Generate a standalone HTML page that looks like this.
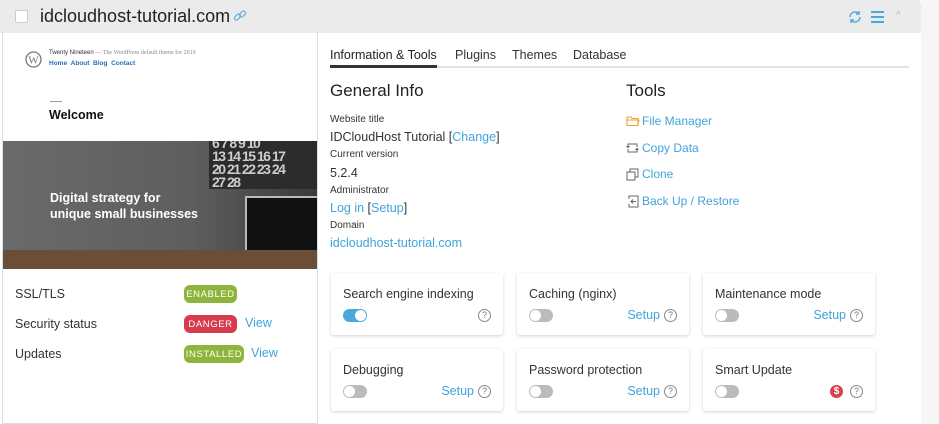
<!DOCTYPE html><html><head><style>
*{margin:0;padding:0;box-sizing:border-box}
body{width:939px;height:424px;background:#f6f6f6;font-family:"Liberation Sans",sans-serif;color:#333;position:relative;overflow:hidden}
.a{position:absolute}
.lnk{color:#3fa4dc}
.card{position:absolute;width:172px;height:62px;background:#fff;border-radius:3px;box-shadow:0 1px 3px rgba(0,0,0,.18)}
.card .t{position:absolute;left:12px;top:14px;font-size:12.5px;color:#333}
.tg{position:absolute;left:12px;top:36px;width:24px;height:13px;border-radius:7px;background:#bbb}
.tg:after{content:"";position:absolute;left:1px;top:1px;width:11px;height:11px;border-radius:50%;background:#fff}
.tg.on{background:#4aa8df}.tg.on:after{left:12px}
.q{position:absolute;right:12px;top:36px;width:13px;height:13px;border:1px solid #888;border-radius:50%;font-size:9px;text-align:center;line-height:11px;color:#777}
.su{position:absolute;right:29px;top:35px;font-size:12.5px;color:#3fa4dc}
.badge{position:absolute;left:184px;height:18px;border-radius:6px;color:#fff;font-size:9.5px;letter-spacing:.6px;line-height:19px;text-align:center}
</style></head><body>
<div class="a" style="left:0;top:0;width:921px;height:424px;background:#fff"></div>
<div class="a" style="left:0;top:0;width:921px;height:33px;background:#ebebeb;border-radius:0 4px 0 0"></div>
<div class="a" style="left:15px;top:10px;width:13px;height:13px;background:#fff;border:1px solid #ccc;border-radius:2px"></div>
<div class="a" style="left:40px;top:6px;font-size:18px;color:#222">idcloudhost-tutorial.com</div>
<svg class="a" style="left:233px;top:9px" width="14" height="14" viewBox="0 0 14 14" fill="none" stroke="#6ab4e4" stroke-width="1.3"><rect x="1" y="6" width="7" height="4" rx="2" transform="rotate(-45 4.5 8)"/><rect x="6" y="3" width="7" height="4" rx="2" transform="rotate(-45 9.5 5)"/></svg>
<svg class="a" style="left:848px;top:10px" width="14" height="14" viewBox="0 0 14 14" fill="none" stroke="#4aa8df" stroke-width="1.4"><path d="M2 7a5 5 0 0 1 9-3M12 7a5 5 0 0 1-9 3"/><path d="M11 1v3h-3M3 13v-3h3"/></svg>
<div class="a" style="left:871px;top:11px;width:13px;height:2px;background:#4aa8df;box-shadow:0 5px 0 #4aa8df,0 10px 0 #4aa8df"></div>
<div class="a" style="left:896px;top:10px;font-size:10px;color:#8ac4ea">^</div>
<div class="a" style="left:2px;top:33px;width:316px;height:391px;border:1px solid #ddd;border-top:none"></div>
<div class="a" style="left:3px;top:34px;width:314px;height:107px;background:#fff"></div>
<svg class="a" style="left:25px;top:51px" width="17" height="17" viewBox="0 0 17 17"><circle cx="8.5" cy="8.5" r="7.5" fill="none" stroke="#777" stroke-width="1.3"/><text x="8.5" y="12.5" font-size="11" text-anchor="middle" fill="#777" font-family="Liberation Serif">W</text></svg>
<div class="a" style="left:49px;top:50px;font-size:6px;color:#333">Twenty Nineteen <span style="color:#888;font-family:'Liberation Serif'">— The WordPress default theme for 2019</span></div>
<div class="a" style="left:49px;top:60px;font-size:6.5px;color:#2a6db5;font-weight:bold">Home &nbsp;About &nbsp;Blog &nbsp;Contact</div>
<div class="a" style="left:50px;top:101px;width:12px;height:1px;background:#999"></div>
<div class="a" style="left:49px;top:108px;font-size:12.5px;font-weight:bold;color:#111">Welcome</div>
<div class="a" style="left:3px;top:141px;width:314px;height:128px;background:linear-gradient(90deg,#6a6a6a 0%,#5e5e5e 60%,#3a3a3a 100%)"></div>
<div class="a" style="left:209px;top:141px;width:108px;height:48px;background:#2c2c2c;overflow:hidden"><div style="margin-top:-4px;padding-left:3px;color:#ccc;font-size:14px;font-weight:bold;line-height:13px;letter-spacing:-1.5px;white-space:nowrap">6 7 8 9 10<br>13 14 15 16 17<br>20 21 22 23 24<br>27 28</div></div>
<div class="a" style="left:245px;top:196px;width:72px;height:56px;background:#111;border:2px solid #bbb;border-right:none"></div>
<div class="a" style="left:3px;top:250px;width:314px;height:19px;background:#6b4e38"></div>
<div class="a" style="left:50px;top:190px;font-size:12.5px;font-weight:bold;color:#fff;line-height:16px">Digital strategy for<br>unique small businesses</div>
<div class="a" style="left:15px;top:287px;font-size:12.5px">SSL/TLS</div>
<div class="a" style="left:15px;top:317px;font-size:12.5px">Security status</div>
<div class="a" style="left:15px;top:347px;font-size:12.5px">Updates</div>
<div class="badge" style="top:285px;width:53px;background:#8db43b">ENABLED</div>
<div class="badge" style="top:315px;width:53px;background:#d63b4e">DANGER</div>
<div class="badge" style="top:345px;width:60px;background:#8db43b">INSTALLED</div>
<div class="a lnk" style="left:245px;top:316px;font-size:12.5px">View</div>
<div class="a lnk" style="left:251px;top:346px;font-size:12.5px">View</div>
<div class="a" style="left:330px;top:66px;width:579px;height:2px;background:#e3e3e3"></div>
<div class="a" style="left:330px;top:65px;width:107px;height:3px;background:#333"></div>
<div class="a" style="left:330px;top:48px;font-size:12.5px;color:#222">Information &amp; Tools</div>
<div class="a" style="left:455px;top:48px;font-size:12.5px">Plugins</div>
<div class="a" style="left:512px;top:48px;font-size:12.5px">Themes</div>
<div class="a" style="left:573px;top:48px;font-size:12.5px">Database</div>
<div class="a" style="left:330px;top:81px;font-size:17px;color:#222">General Info</div>
<div class="a" style="left:330px;top:114px;font-size:10px">Website title</div>
<div class="a" style="left:330px;top:130px;font-size:12.5px">IDCloudHost Tutorial [<span class="lnk">Change</span>]</div>
<div class="a" style="left:330px;top:149px;font-size:10px">Current version</div>
<div class="a" style="left:330px;top:166px;font-size:12.5px">5.2.4</div>
<div class="a" style="left:330px;top:185px;font-size:10px">Administrator</div>
<div class="a" style="left:330px;top:201px;font-size:12.5px"><span class="lnk">Log in</span> [<span class="lnk">Setup</span>]</div>
<div class="a" style="left:330px;top:220px;font-size:10px">Domain</div>
<div class="a lnk" style="left:330px;top:236px;font-size:12.5px">idcloudhost-tutorial.com</div>
<div class="a" style="left:626px;top:81px;font-size:17px;color:#222">Tools</div>
<svg class="a" style="left:626px;top:115px" width="14" height="12" viewBox="0 0 14 12" fill="none" stroke="#f0a030" stroke-width="1.1"><path d="M1 2h4l1 1.5h6v7H1z M1 5h12l-1.5 5.5"/></svg>
<div class="a lnk" style="left:642px;top:114px;font-size:12px">File Manager</div>
<svg class="a" style="left:626px;top:142px" width="13" height="12" viewBox="0 0 13 12" fill="none" stroke="#666" stroke-width="1"><path d="M2 5V2h9v3M11 7v3H2V7M0.5 4l1.5 1.5 1.5-1.5M9.5 8l1.5-1.5 1.5 1.5"/></svg>
<div class="a lnk" style="left:642px;top:141px;font-size:12px">Copy Data</div>
<svg class="a" style="left:626px;top:168px" width="13" height="13" viewBox="0 0 13 13" fill="none" stroke="#666" stroke-width="1"><rect x="1" y="4" width="8" height="8"/><path d="M4 4V1h8v8H9"/></svg>
<div class="a lnk" style="left:642px;top:167px;font-size:12px">Clone</div>
<svg class="a" style="left:627px;top:195px" width="13" height="13" viewBox="0 0 13 13" fill="none" stroke="#666" stroke-width="1"><path d="M2 4V1h9v11H2V9M9 6.5H4M6 4.5l-2 2 2 2"/></svg>
<div class="a lnk" style="left:642px;top:194px;font-size:12px">Back Up / Restore</div>
<div class="card" style="left:331px;top:273px"><div class="t">Search engine indexing</div><div class="tg on"></div><div class="q">?</div></div>
<div class="card" style="left:517px;top:273px"><div class="t">Caching (nginx)</div><div class="tg"></div><div class="su">Setup</div><div class="q">?</div></div>
<div class="card" style="left:703px;top:273px"><div class="t">Maintenance mode</div><div class="tg"></div><div class="su">Setup</div><div class="q">?</div></div>
<div class="card" style="left:331px;top:349px"><div class="t">Debugging</div><div class="tg"></div><div class="su">Setup</div><div class="q">?</div></div>
<div class="card" style="left:517px;top:349px"><div class="t">Password protection</div><div class="tg"></div><div class="su">Setup</div><div class="q">?</div></div>
<div class="card" style="left:703px;top:349px"><div class="t">Smart Update</div><div class="tg"></div><div style="position:absolute;right:32px;top:36px;width:13px;height:13px;border-radius:50%;background:#d6434f;color:#fff;font-size:10px;font-weight:bold;text-align:center;line-height:13px">$</div><div class="q">?</div></div>
</body></html>
